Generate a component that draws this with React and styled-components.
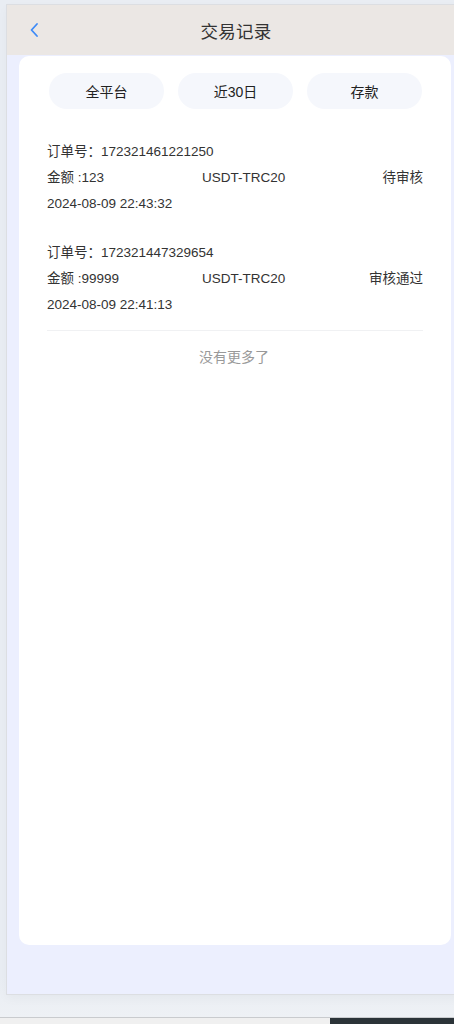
import React from "react";
import styled, { createGlobalStyle } from "styled-components";

const Global = createGlobalStyle`
  html, body { margin: 0; padding: 0; }
  body {
    background: #e9edf3;
    overflow: hidden;
    font-family: "Liberation Sans", Arial, "Noto Sans CJK SC", sans-serif;
    color: #333;
  }
`;

const Page = styled.div`
  width: 454px;
  height: 1024px;
  overflow: hidden;
  display: flex;
  flex-direction: column;
`;

const Stage = styled.div`
  flex: 1;
  padding: 4px 0 0 6px;
  display: flex;
  flex-direction: column;
  background: linear-gradient(#e9edf3, #e9edf3 96%, #eef1f5);
`;

const Frame = styled.div`
  width: 458px;
  height: 989px;
  border: 1px solid #dcdee2;
  border-right: none;
  display: flex;
  flex-direction: column;
  background: #eceffe;
  box-shadow: 0 4px 10px rgba(0, 0, 0, 0.03);
`;

const Header = styled.div`
  height: 50px;
  flex-shrink: 0;
  background: #ebe7e4;
  display: flex;
  align-items: center;
  justify-content: center;
  position: relative;
`;

const Back = styled.button`
  position: absolute;
  left: 22px;
  top: 50%;
  transform: translateY(-50%);
  background: none;
  border: none;
  padding: 0;
  display: flex;
  cursor: pointer;
`;

const Title = styled.h1`
  margin: 0;
  font-size: 17.5px;
  font-weight: 400;
  color: #333;
  font-family: "Noto Sans CJK SC", sans-serif;
  letter-spacing: 0.3px;
`;

const Body = styled.div`
  flex: 1;
  padding: 1px 14px 0 12px;
`;

const Card = styled.div`
  background: #fff;
  border-radius: 10px;
  height: 889px;
  padding: 17px 28px 0 28px;
  box-sizing: border-box;
`;

const Tabs = styled.div`
  display: grid;
  grid-template-columns: repeat(3, 115px);
  gap: 14px;
  justify-content: center;
  margin-left: 1px;
  margin-bottom: 30px;
`;

const Tab = styled.div`
  height: 36px;
  border-radius: 18px;
  background: #f5f7fc;
  display: flex;
  align-items: center;
  justify-content: center;
  font-size: 14px;
  color: #222;
  font-family: "Liberation Sans", "Noto Sans CJK SC", sans-serif;
`;

const Record = styled.div`
  display: flex;
  flex-direction: column;
  margin-bottom: ${(p) => (p.$last ? "12px" : "23px")};
`;

const Line = styled.div`
  height: 26px;
  line-height: 26px;
  font-size: 13.5px;
  color: #333;
  white-space: nowrap;
`;

const InfoRow = styled(Line)`
  display: grid;
  grid-template-columns: 155px auto 1fr;
`;

const Status = styled.span`
  text-align: right;
`;

const Divider = styled.div`
  height: 1px;
  background: #f0f1f3;
`;

const NoMore = styled.div`
  text-align: center;
  font-size: 14px;
  color: #999;
  padding-top: 15px;
  padding-right: 2px;
  font-family: "Noto Sans CJK SC", sans-serif;
`;

const BottomBar = styled.div`
  height: 6px;
  display: flex;
  border-top: 1px solid #c9cbce;
`;

const BarLeft = styled.div`
  width: 330px;
  background: #f0f0f0;
`;

const BarRight = styled.div`
  flex: 1;
  background: #2b3338;
`;

const records = [
  { id: "172321461221250", amount: "123", chain: "USDT-TRC20", status: "待审核", time: "2024-08-09 22:43:32" },
  { id: "172321447329654", amount: "99999", chain: "USDT-TRC20", status: "审核通过", time: "2024-08-09 22:41:13" },
];

export default function App() {
  return (
    <>
      <Global />
      <Page>
        <Stage>
          <Frame>
            <Header>
              <Back aria-label="back">
                <svg width="10" height="15" viewBox="0 0 10 15" fill="none">
                  <path d="M8 1.5L2.5 7.5L8 13.5" stroke="#3d8af7" strokeWidth="1.8" strokeLinecap="round" strokeLinejoin="round" />
                </svg>
              </Back>
              <Title>交易记录</Title>
            </Header>
            <Body>
              <Card>
                <Tabs>
                  <Tab>全平台</Tab>
                  <Tab>近30日</Tab>
                  <Tab>存款</Tab>
                </Tabs>
                {records.map((r, i) => (
                  <Record key={r.id} $last={i === records.length - 1}>
                    <Line>订单号：{r.id}</Line>
                    <InfoRow>
                      <span>金额 :{r.amount}</span>
                      <span>{r.chain}</span>
                      <Status>{r.status}</Status>
                    </InfoRow>
                    <Line>{r.time}</Line>
                  </Record>
                ))}
                <Divider />
                <NoMore>没有更多了</NoMore>
              </Card>
            </Body>
          </Frame>
        </Stage>
        <BottomBar>
          <BarLeft />
          <BarRight />
        </BottomBar>
      </Page>
    </>
  );
}
